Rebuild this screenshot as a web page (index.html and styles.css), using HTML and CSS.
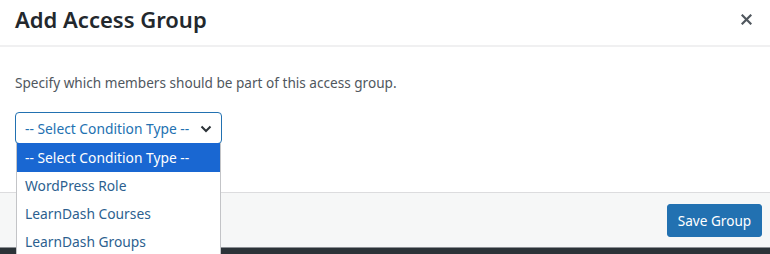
FILE: index.html
```html
<!DOCTYPE html>
<html>
<head>
    <meta charset="utf-8">
    <title>Add Access Group</title>
    <link rel="stylesheet" href="styles.css">
</head>
<body>

<div class="modal">

    <div class="modal-header">
        <h1 class="modal-title">Add Access Group</h1>
        <button class="modal-close" title="Close">
            <svg width="11" height="11" viewBox="0 0 11 11"><path d="M1.5 1.5l8 8M9.5 1.5l-8 8" stroke="#50575e" stroke-width="2.2" stroke-linecap="square"/></svg>
        </button>
    </div>

    <div class="modal-body">

        <p class="modal-text">Specify which members should be part of this access group.</p>

        <div class="select-holder">
            <div class="condition-select">
                <span>-- Select Condition Type --</span>
                <svg class="select-arrow" width="12" height="8" viewBox="0 0 12 8"><path d="M1.5 1.5l4.5 4.5 4.5-4.5" fill="none" stroke="#2c3338" stroke-width="2"/></svg>
            </div>

            <ul class="select-options">
                <li class="select-option selected">-- Select Condition Type --</li>
                <li class="select-option">WordPress Role</li>
                <li class="select-option">LearnDash Courses</li>
                <li class="select-option">LearnDash Groups</li>
            </ul>
        </div>

    </div>

    <div class="modal-footer">
        <button class="save-button">Save Group</button>
    </div>

    <div class="bottom-bar"></div>

</div>

</body>
</html>
```

FILE: styles.css
```css
* {
    box-sizing: border-box;
    font-family: "Noto Sans", "Open Sans", sans-serif;
}

body {
    margin: 0;
    background: #fff;
    color: #1d2327;
}

.modal {
    width: 770px;
    height: 254px;
    display: flex;
    flex-direction: column;
    overflow: hidden;
}

.modal-header {
    height: 47px;
    display: flex;
    align-items: center;
    justify-content: space-between;
    padding: 0 16px 7px 15px;
    border-bottom: 2px solid #f0f0f1;
}

.modal-title {
    margin: 0;
    font-size: 22px;
    font-weight: 600;
    color: #23282d;
}

.modal-close {
    border: 0;
    background: none;
    padding: 0;
    width: 16px;
    height: 16px;
    display: flex;
    align-items: center;
    justify-content: center;
    cursor: pointer;
}

.modal-body {
    height: 145px;
    padding: 26px 15px 0 15px;
}

.modal-text {
    margin: 0 0 19px 0;
    font-size: 13.6px;
    line-height: 20px;
    color: #50575e;
}

.select-holder {
    position: relative;
    width: 207px;
}

.condition-select {
    height: 32px;
    border: 1px solid #2271b1;
    border-radius: 4px;
    display: flex;
    align-items: center;
    justify-content: space-between;
    padding: 0 9px 0 9px;
    font-size: 13.8px;
    color: #2271b1;
    background: #fff;
}

.select-arrow {
    margin-top: 1px;
}

.select-options {
    position: absolute;
    top: 31px;
    left: 1px;
    width: 205px;
    margin: 0;
    padding: 0;
    list-style: none;
    background: #fff;
    border: 1px solid #c3c4c7;
    border-top: 0;
    z-index: 2;
}

.select-option {
    height: 28px;
    line-height: 28px;
    padding: 0 8px;
    font-size: 13.8px;
    color: #2c5f8f;
}

.select-option.selected {
    height: 29px;
    line-height: 29px;
    background: #1967d2;
    color: #fff;
}

.modal-footer {
    height: 55px;
    background: #f6f7f7;
    border-top: 1px solid #dcdcde;
    display: flex;
    align-items: center;
    justify-content: flex-end;
    padding: 0 8px 0 0;
}

.save-button {
    height: 33px;
    width: 95px;
    border: 1px solid #2271b1;
    border-radius: 3px;
    background: #2271b1;
    color: #fff;
    font-size: 13.6px;
    cursor: pointer;
}

.bottom-bar {
    flex: 1;
    background: #2c3338;
    border-top: 1px solid #8c8f94;
}
```
